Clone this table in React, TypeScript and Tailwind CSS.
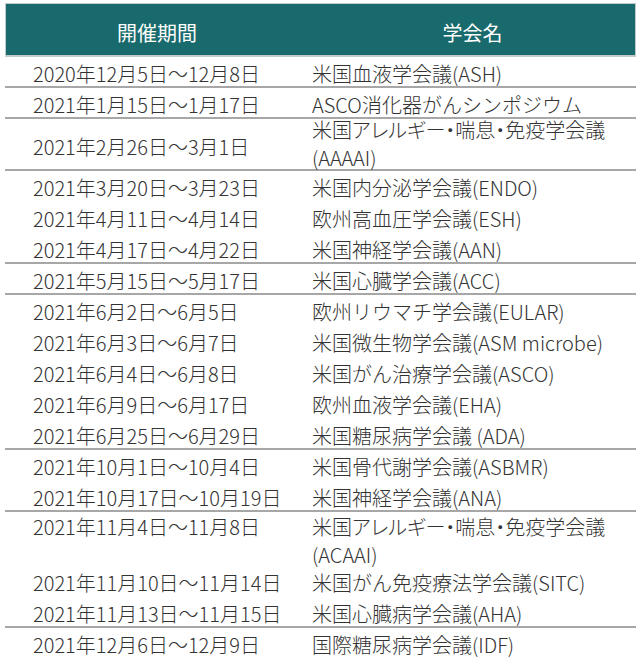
type Row = {
  date: string
  name: string[]
  sep?: boolean
  alignTop?: boolean
}

const rows: Row[] = [
  { date: '2020年12月5日～12月8日', name: ['米国血液学会議(ASH)'], sep: true },
  { date: '2021年1月15日～1月17日', name: ['ASCO消化器がんシンポジウム'], sep: true },
  { date: '2021年2月26日～3月1日', name: ['米国アレルギー・喘息・免疫学会議', '(AAAAI)'], sep: true },
  { date: '2021年3月20日～3月23日', name: ['米国内分泌学会議(ENDO)'] },
  { date: '2021年4月11日～4月14日', name: ['欧州高血圧学会議(ESH)'] },
  { date: '2021年4月17日～4月22日', name: ['米国神経学会議(AAN)'], sep: true },
  { date: '2021年5月15日～5月17日', name: ['米国心臓学会議(ACC)'], sep: true },
  { date: '2021年6月2日～6月5日', name: ['欧州リウマチ学会議(EULAR)'] },
  { date: '2021年6月3日～6月7日', name: ['米国微生物学会議(ASM microbe)'] },
  { date: '2021年6月4日～6月8日', name: ['米国がん治療学会議(ASCO)'] },
  { date: '2021年6月9日～6月17日', name: ['欧州血液学会議(EHA)'] },
  { date: '2021年6月25日～6月29日', name: ['米国糖尿病学会議 (ADA)'], sep: true },
  { date: '2021年10月1日～10月4日', name: ['米国骨代謝学会議(ASBMR)'] },
  { date: '2021年10月17日～10月19日', name: ['米国神経学会議(ANA)'], sep: true },
  { date: '2021年11月4日～11月8日', name: ['米国アレルギー・喘息・免疫学会議', '(ACAAI)'], alignTop: true },
  { date: '2021年11月10日～11月14日', name: ['米国がん免疫療法学会議(SITC)'] },
  { date: '2021年11月13日～11月15日', name: ['米国心臓病学会議(AHA)'], sep: true },
  { date: '2021年12月6日～12月9日', name: ['国際糖尿病学会議(IDF)'] },
]

function TableRow({ row }: { row: Row }) {
  const double = row.name.length > 1

  if (double) {
    return (
      <div
        className={`grid grid-cols-[302px_329px] ${row.alignTop ? 'h-[54px]' : 'h-[52px]'} ${row.sep ? 'border-b-2 border-[#a7a7a7]' : ''}`}
      >
        <div className={`flex pl-[28px] ${row.alignTop ? 'items-start pt-[1px]' : 'items-center pt-[3px]'}`}>
          <span className="leading-[28px]">{row.date}</span>
        </div>
        <div className={`pl-[5px] ${row.alignTop ? 'pt-[1px]' : '-mt-[3px]'}`}>
          {row.name.map((line) => (
            <div
              key={line}
              className="leading-[28px] whitespace-nowrap [font-feature-settings:'palt']"
            >
              {line}
            </div>
          ))}
        </div>
      </div>
    )
  }

  return (
    <div
      className={`grid grid-cols-[302px_329px] h-[31px] ${row.sep ? 'border-b-2 border-[#a7a7a7]' : ''}`}
    >
      <div className="flex items-center pl-[28px] pt-[3px]">
        <span className="leading-[28px]">{row.date}</span>
      </div>
      <div className="flex items-center pl-[5px] pt-[3px]">
        <span className="leading-[28px] whitespace-nowrap">{row.name[0]}</span>
      </div>
    </div>
  )
}

export default function App() {
  return (
    <div className="w-[640px] h-[659px] overflow-hidden bg-white pl-[5px] pt-[3px] text-[#333] text-[20px] font-light font-['Noto_Sans_CJK_JP',sans-serif]">
      <div className="w-[631px]">
        {/* header */}
        <div className="grid grid-cols-[302px_329px] h-[54px] border-t border-x border-b-2 border-[#c2cbcb] bg-[#186a6c] text-white font-normal">
          <div className="flex items-center justify-center pt-[6px]">開催期間</div>
          <div className="flex items-center justify-center pt-[6px]">学会名</div>
        </div>

        {rows.map((row) => (
          <TableRow key={row.date} row={row} />
        ))}
      </div>
    </div>
  )
}
